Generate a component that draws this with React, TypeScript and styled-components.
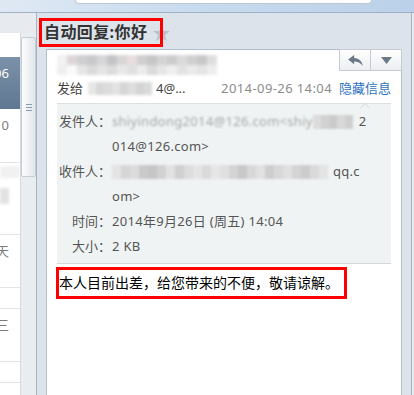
import React from 'react';
import styled, { createGlobalStyle, css } from 'styled-components';

const GlobalStyle = createGlobalStyle`
  html, body { margin: 0; padding: 0; }
  body {
    width: 414px;
    height: 395px;
    overflow: hidden;
    background: #dde3ea;
    font-family: "Noto Sans", "Noto Sans CJK SC", sans-serif;
  }
`;

const Screen = styled.div`
  width: 414px;
  height: 395px;
  display: flex;
  flex-direction: column;
  overflow: hidden;
`;

const TopBar = styled.div`
  flex: none;
  height: 12px;
  padding-left: 75px;
  background: linear-gradient(90deg, #dfe9f4, #c9dbee 45%, #bbd1e9);
  border-bottom: 1px solid #9db2c8;
`;

const TopTab = styled.div`
  width: 295px;
  height: 3px;
  background: #fff;
  border: 1px solid #b9c8d8;
  border-top: none;
  border-radius: 0 0 6px 6px;
`;

const Body = styled.div`
  flex: 1;
  display: flex;
  min-height: 0;
`;

const Sidebar = styled.div`
  flex: none;
  width: 36px;
  padding-top: 20px;
  display: flex;
  background: #e7ebef;
  border-right: 1px solid #a9b4c0;
`;

const List = styled.div`
  width: 20px;
  background: #fff;
  overflow: hidden;
`;

const ListItem = styled.div<{ $h: number; $selected?: boolean; $line?: boolean }>`
  height: ${p => p.$h}px;
  box-sizing: border-box;
  display: flex;
  justify-content: flex-end;
  align-items: flex-start;
  padding: 8px 11px 0 0;
  white-space: nowrap;
  font-size: 13px;
  line-height: 16px;
  color: #7c7c7c;
  ${p => p.$line && css`border-bottom: 1px solid #e2e5e8;`}
  ${p => p.$selected && css`
    background: linear-gradient(#7b91a9, #5f7791);
    color: #fff;
  `}
`;

const BlurItem = styled.div`
  height: 72px;
  box-sizing: border-box;
  border-bottom: 1px solid #e2e5e8;
  padding-top: 3px;
  display: flex;
  flex-direction: column;
  gap: 10px;
`;

const FadedBar = styled.div<{ $w: number; $h: number; $c: string }>`
  width: ${p => p.$w}px;
  height: ${p => p.$h}px;
  background: ${p => p.$c};
  filter: blur(1.5px);
`;

const ScrollTrack = styled.div`
  width: 16px;
  box-sizing: border-box;
  padding-top: 4px;
  background: #eaedf0;
  border-left: 1px solid #d6dae0;
`;

const ScrollThumb = styled.div`
  height: 140px;
  box-sizing: border-box;
  border: 1px solid #c5ccd4;
  border-radius: 2px;
  background: linear-gradient(90deg, #fbfcfd, #e2e6ea);
  display: flex;
  align-items: center;
  justify-content: center;
`;

const Grip = styled.div`
  width: 6px;
  height: 7px;
  background: repeating-linear-gradient(#8a9bb0 0 1px, transparent 1px 3px);
`;

const Main = styled.div`
  flex: 1;
  display: flex;
  min-width: 0;
`;

const Content = styled.div`
  flex: 1;
  display: flex;
  flex-direction: column;
  padding: 5px 0 0 2px;
  min-width: 0;
`;

const RightRail = styled.div`
  flex: none;
  width: 2px;
  background: #e7ecf1;
  border-left: 1px solid #aab4bf;
`;

const TitleRow = styled.div`
  display: flex;
  align-items: center;
  height: 29px;
`;

const TitleBox = styled.div`
  position: relative;
  z-index: 1;
  width: 124px;
  height: 29px;
  box-sizing: border-box;
  border: 3px solid #ff0000;
  padding-left: 2px;
  font-size: 16px;
  font-weight: bold;
  line-height: 23px;
  color: #333;
  white-space: nowrap;
  letter-spacing: 0.4px;
`;

const StarIcon = styled.svg`
  margin-left: -10px;
  flex: none;
`;

const Card = styled.div`
  margin: 2px 0 0 7px;
  width: 356px;
  flex: 1;
  box-sizing: border-box;
  display: flex;
  flex-direction: column;
  background: #fff;
  border: 1px solid #b3bdc8;
  border-bottom: none;
  padding: 0 10px;
`;

const CardHeader = styled.div`
  height: 30px;
  display: flex;
  justify-content: space-between;
  align-items: flex-start;
`;

const ButtonGroup = styled.div`
  display: flex;
  margin: -1px -11px 0 0;
`;

const ToolButton = styled.div<{ $w: number; $first?: boolean }>`
  width: ${p => p.$w}px;
  height: 22px;
  box-sizing: border-box;
  display: flex;
  align-items: center;
  justify-content: center;
  border: 1px solid #c5ccd3;
  ${p => !p.$first && css`border-left: none;`}
  background: linear-gradient(#ffffff, #eceef1);
`;

const MosaicWrap = styled.span<{ $w: number; $h: number; $blur: number; $mt?: number }>`
  display: inline-flex;
  flex-wrap: wrap;
  flex: none;
  width: ${p => p.$w}px;
  height: ${p => p.$h}px;
  margin-top: ${p => p.$mt ?? 0}px;
  overflow: hidden;
  filter: blur(${p => p.$blur}px);
  vertical-align: middle;
`;

const Cell = styled.span<{ $w: number; $h: number }>`
  flex: none;
  width: ${p => p.$w}px;
  height: ${p => p.$h}px;
`;

const MetaRow = styled.div`
  height: 16px;
  margin-bottom: 7px;
  display: flex;
  align-items: center;
  justify-content: space-between;
  font-size: 13px;
  line-height: 16px;
  white-space: nowrap;
`;

const MetaLeft = styled.div`
  display: flex;
  align-items: center;
  gap: 5px;
  color: #444;
`;

const AddrTail = styled.span`
  margin-left: -4px;
`;

const MetaRight = styled.div`
  display: flex;
  align-items: center;
  gap: 7px;
`;

const DateText = styled.span`
  color: #8c8c8c;
  letter-spacing: 0.4px;
`;

const HideLink = styled.span`
  color: #2f72c0;
`;

const InfoPanel = styled.div`
  position: relative;
  background: #eff3f3;
  border-top: 1px solid #dbe0e0;
  border-bottom: 1px solid #d3d8d8;
  padding: 5px 0 4px;

  &::before {
    content: '';
    position: absolute;
    right: 21px;
    top: -6px;
    border: 5px solid transparent;
    border-bottom-color: #d3d9d9;
  }
  &::after {
    content: '';
    position: absolute;
    right: 22px;
    top: -4px;
    border: 4px solid transparent;
    border-bottom-color: #eff3f3;
  }
`;

const InfoGrid = styled.div`
  display: grid;
  grid-template-columns: 54px 1fr;
  font-size: 13px;
  line-height: 25px;
  color: #555;
  white-space: nowrap;
`;

const Label = styled.div`
  text-align: right;
  color: #555;
`;

const Value = styled.div`
  display: flex;
  align-items: center;
  padding-left: 1px;
  letter-spacing: 0.3px;
`;

const BlurredText = styled.span`
  color: #a8a8a8;
  filter: blur(1.1px);
`;

const BodyBox = styled.div`
  align-self: flex-start;
  margin: 3px 0 0 -1px;
  border: 3px solid #ff0000;
  padding: 0 5px 0 0;
  font-size: 14px;
  line-height: 26px;
  color: #000;
  white-space: nowrap;
`;

type MosaicProps = { w: number; h: number; cw: number; ch: number; colors: string[]; blur?: number; mt?: number };

const Mosaic = ({ w, h, cw, ch, colors, blur = 1, mt }: MosaicProps) => (
  <MosaicWrap $w={w} $h={h} $blur={blur} $mt={mt}>
    {colors.map((c, i) => (
      <Cell key={i} $w={cw} $h={ch} style={{ background: c }} />
    ))}
  </MosaicWrap>
);

const senderColors = [
  '#f2f2f2', '#ddd6d8', '#cfcfd2', '#c9c9cc', '#d6d6d8', '#c4c4c6', '#d9d6d6', '#e8dede', '#cfcfcf',
  '#c6c6c6', '#d4d4d4', '#cbcbcb', '#dadada', '#d0d0d0', '#c8c8c8', '#dedede', '#efefef',
  '#fafafa', '#e6e6e6', '#dadada', '#e4e4e4', '#dcdcdc', '#e8e8e8', '#e0e0e0', '#ececec', '#dadada',
  '#e6e6e6', '#efefef', '#e2e2e2', '#eaeaea', '#e4e4e4', '#eeeeee', '#f4f4f4', '#fafafa',
];

const toColors = ['#e6e6e6', '#d8d8d8', '#dcdcdc', '#e2e2e2', '#d6d6d6', '#dedede', '#d4d4d4', '#dadada', '#e4e4e4'];

const fromColors = ['#dcdcdc', '#d2d2d2', '#cbcbcb', '#d8d8d8', '#cfcfcf', '#e0e0e0'];

const recvColors = [
  '#e4e4e4', '#d6d6d6', '#dcdcdc', '#cacaca', '#c6c6c6', '#d2d2d2', '#e2e2e2', '#d0d0d0', '#dcdcdc',
  '#e4e4e4', '#dadada', '#e6e6e6', '#e0e0e0', '#d4d4d4', '#c8c8c8', '#d8d8d8', '#e2e2e2', '#cecece',
  '#d8d8d8', '#e0e0e0', '#d4d4d4', '#cccccc', '#dadada', '#e4e4e4', '#d6d6d6',
];

type Item = { h: number; text?: string; sel?: boolean; line?: boolean; blur?: boolean };

const items: Item[] = [
  { h: 24 },
  { h: 52, sel: true, text: '14:06' },
  { h: 54, text: '09-10', line: true },
  { h: 72, blur: true },
  { h: 53, text: '昨天', line: true },
  { h: 21, line: true },
  { h: 53, text: '周三', line: true },
  { h: 21, line: true },
  { h: 40 },
];

const ReplyIcon = () => (
  <svg width="15" height="11" viewBox="0 0 16 12">
    <path d="M6.5 0 L0 5 L6.5 10 V7 C10.5 7 13.5 8.2 16 12 C15.2 7 12 3.6 6.5 3.2 Z" fill="#6b7886" />
  </svg>
);

const CaretIcon = () => (
  <svg width="11" height="7" viewBox="0 0 11 7">
    <polygon points="0,0 11,0 5.5,7" fill="#6b7886" />
  </svg>
);

export default function App() {
  return (
    <Screen>
      <GlobalStyle />
      <TopBar>
        <TopTab />
      </TopBar>
      <Body>
        <Sidebar>
          <List>
            {items.map((it, i) =>
              it.blur ? (
                <BlurItem key={i}>
                  <FadedBar $w={20} $h={12} $c="#f1f1f1" />
                  <FadedBar $w={9} $h={16} $c="#e2e2e2" />
                </BlurItem>
              ) : (
                <ListItem key={i} $h={it.h} $selected={it.sel} $line={it.line}>
                  {it.text}
                </ListItem>
              )
            )}
          </List>
          <ScrollTrack>
            <ScrollThumb>
              <Grip />
            </ScrollThumb>
          </ScrollTrack>
        </Sidebar>
        <Main>
          <Content>
            <TitleRow>
              <TitleBox>自动回复:你好</TitleBox>
              <StarIcon width="17" height="16" viewBox="0 0 24 23">
                <polygon
                  points="12,0 15,8.3 24,8.6 17,14.2 19.5,23 12,17.8 4.5,23 7,14.2 0,8.6 9,8.3"
                  fill="#bcc2ca"
                />
              </StarIcon>
            </TitleRow>
            <Card>
              <CardHeader>
                <Mosaic w={167} h={20} cw={10} ch={10} colors={senderColors} blur={1.8} mt={5} />
                <ButtonGroup>
                  <ToolButton $w={32} $first>
                    <ReplyIcon />
                  </ToolButton>
                  <ToolButton $w={31}>
                    <CaretIcon />
                  </ToolButton>
                </ButtonGroup>
              </CardHeader>
              <MetaRow>
                <MetaLeft>
                  <span>发给</span>
                  <Mosaic w={67} h={13} cw={8} ch={13} colors={toColors} blur={1.5} />
                  <AddrTail>4@...</AddrTail>
                </MetaLeft>
                <MetaRight>
                  <DateText>2014-09-26 14:04</DateText>
                  <HideLink>隐藏信息</HideLink>
                </MetaRight>
              </MetaRow>
              <InfoPanel>
                <InfoGrid>
                  <Label>发件人：</Label>
                  <Value>
                    <BlurredText>shiyindong2014@126.com&lt;shiy</BlurredText>
                    <Mosaic w={46} h={14} cw={8} ch={14} colors={fromColors} blur={1.2} />
                    <span>2</span>
                  </Value>
                  <Label />
                  <Value>014@126.com&gt;</Value>
                  <Label>收件人：</Label>
                  <Value>
                    <Mosaic w={221} h={14} cw={9} ch={14} colors={recvColors} blur={1.2} />
                    <span>qq.c</span>
                  </Value>
                  <Label />
                  <Value>om&gt;</Value>
                  <Label>时间：</Label>
                  <Value>2014年9月26日 (周五) 14:04</Value>
                  <Label>大小：</Label>
                  <Value>2 KB</Value>
                </InfoGrid>
              </InfoPanel>
              <BodyBox>本人目前出差，给您带来的不便，敬请谅解。</BodyBox>
            </Card>
          </Content>
          <RightRail />
        </Main>
      </Body>
    </Screen>
  );
}
